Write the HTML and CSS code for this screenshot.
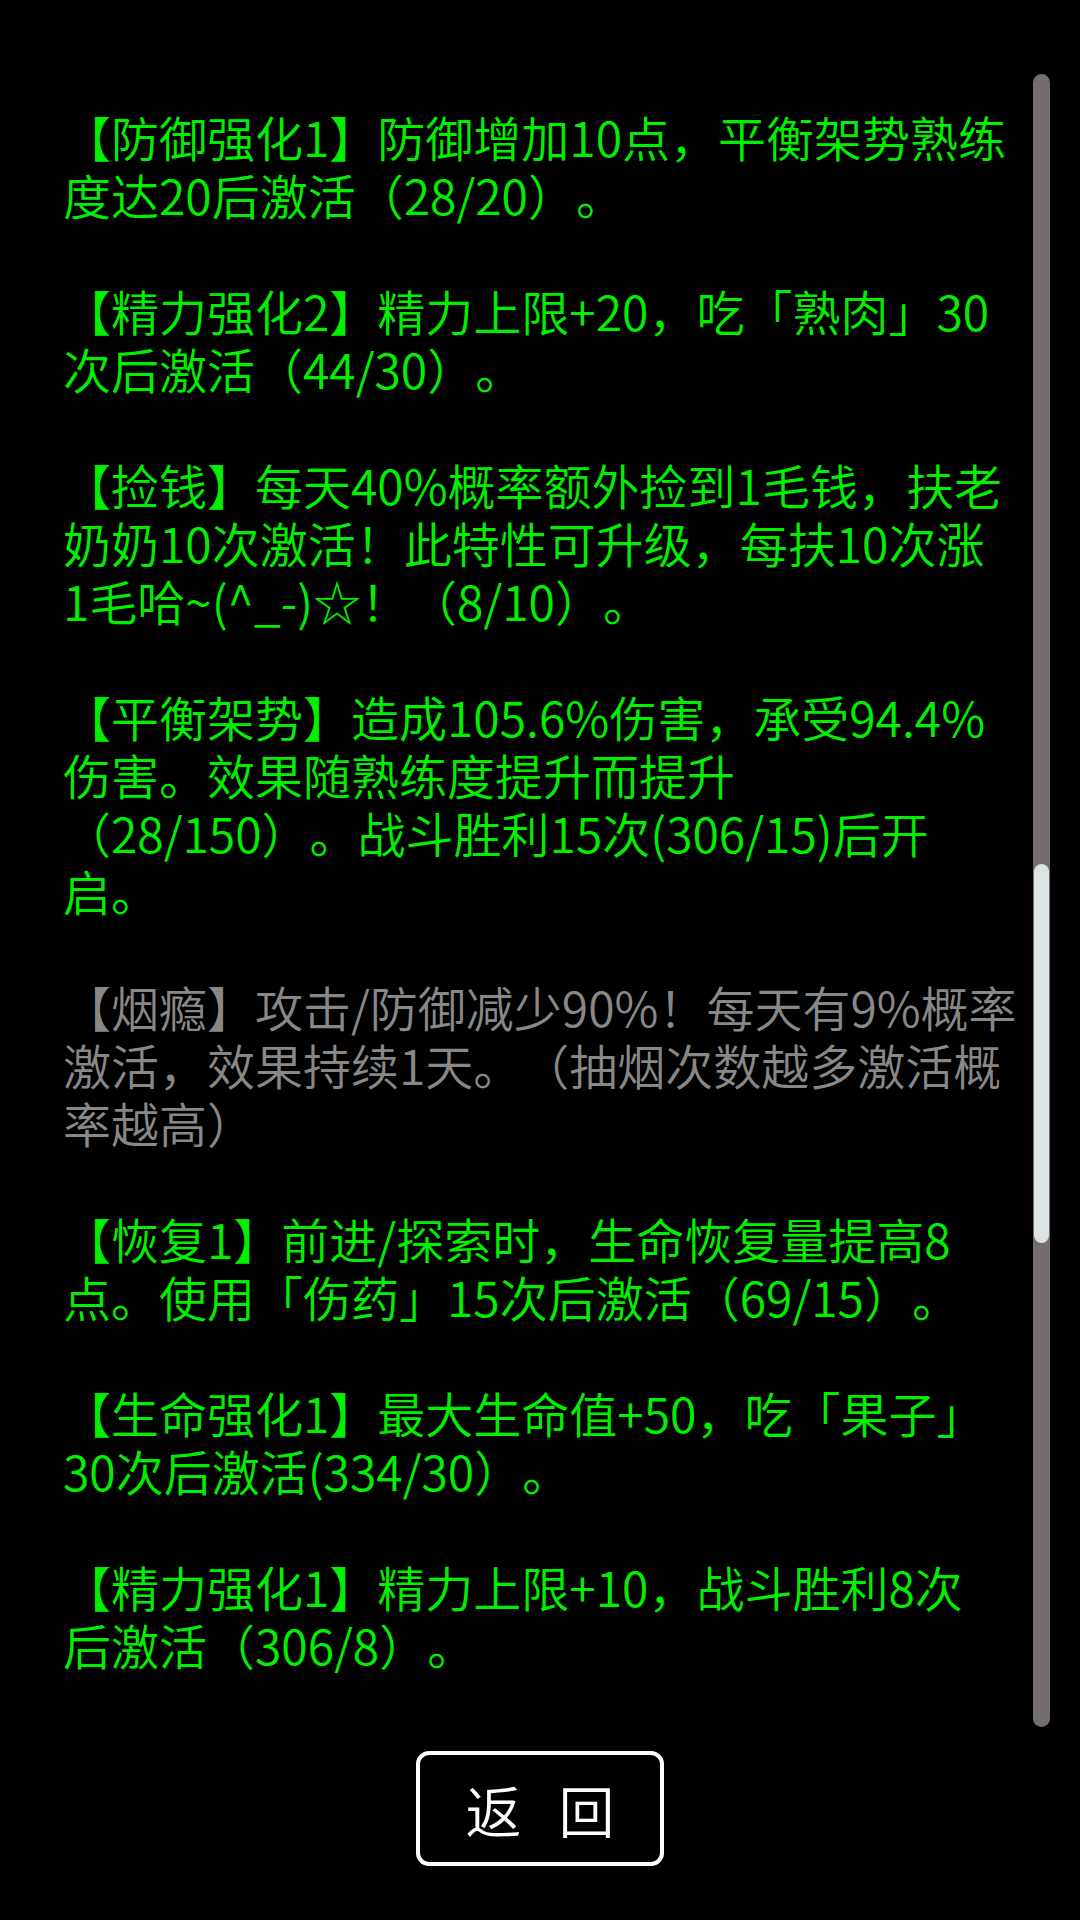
FILE: index.html
```html
<!DOCTYPE html>
<html lang="zh-CN">

<head>
    <meta charset="UTF-8">
    <meta name="viewport" content="width=device-width, initial-scale=1.0">
    <title>特性</title>
    <link rel="stylesheet" href="styles.css">
</head>

<body>
    <div class="page">
        <div class="panel">
            <div class="list">
                <p class="trait">【防御强化1】防御增加10点，平衡架势熟练<br>度达20后激活（28/20）。</p>
                <p class="trait">【精力强化2】精力上限+20，吃「熟肉」30<br>次后激活（44/30）。</p>
                <p class="trait">【捡钱】每天40%概率额外捡到1毛钱，扶老<br>奶奶10次激活！此特性可升级，每扶10次涨<br>1毛哈~(^_-)☆！（8/10）。</p>
                <p class="trait">【平衡架势】造成105.6%伤害，承受94.4%<br>伤害。效果随熟练度提升而提升<br>（28/150）。战斗胜利15次(306/15)后开<br>启。</p>
                <p class="trait off">【烟瘾】攻击/防御减少90%！每天有9%概率<br>激活，效果持续1天。（抽烟次数越多激活概<br>率越高）</p>
                <p class="trait">【恢复1】前进/探索时，生命恢复量提高8<br>点。使用「伤药」15次后激活（69/15）。</p>
                <p class="trait">【生命强化1】最大生命值+50，吃「果子」<br>30次后激活(334/30）。</p>
                <p class="trait">【精力强化1】精力上限+10，战斗胜利8次<br>后激活（306/8）。</p>
            </div>
            <div class="track">
                <div class="thumb"></div>
            </div>
        </div>

        <div class="footer">
            <button class="back"><span>返</span><span>回</span></button>
        </div>
    </div>
</body>

</html>
```

FILE: styles.css
```css
body {
    margin: 0;
    background-color: #000;
    font-family: "Noto Sans CJK SC", "Noto Sans", sans-serif;
}

.page {
    display: flex;
    flex-direction: column;
    height: 100vh;
}

.panel {
    display: flex;
    align-items: flex-start;
    padding: 74px 30px 0 63px;
}

.list {
    flex: 1;
    padding-top: 33px;
    overflow: hidden;
}

.trait {
    margin: 0 0 58px;
    font-size: 48px;
    font-weight: 350;
    line-height: 58px;
    color: #00f000;
    white-space: nowrap;
    text-spacing-trim: space-all;
}

.trait:last-child {
    margin-bottom: 0;
}

.trait.off {
    color: #888888;
}

.track {
    width: 17px;
    height: 1653px;
    border-radius: 9px;
    background: #756e70;
}

.thumb {
    margin: 790px 1px 0;
    height: 379px;
    border-radius: 8px;
    background: #dde2e4;
}

.footer {
    display: flex;
    justify-content: center;
    padding-top: 24px;
}

.back {
    display: flex;
    justify-content: center;
    align-items: center;
    gap: 37px;
    width: 248px;
    height: 115px;
    padding: 0;
    background: #000;
    color: #fff;
    border: 4px solid #fff;
    border-radius: 13px;
    font-family: "Noto Sans CJK SC", sans-serif;
    font-size: 56px;
    font-weight: 350;
    cursor: pointer;
}
```
